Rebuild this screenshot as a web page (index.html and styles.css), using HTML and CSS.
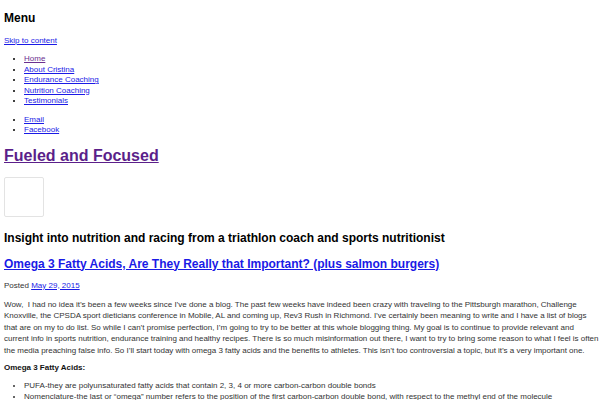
FILE: index.html
```html
<!DOCTYPE html>
<html>
<head>
<meta charset="utf-8">
<link rel="stylesheet" href="styles.css">
</head>
<body>
<div class="page">
  <h2 class="menu-title">Menu</h2>
  <a class="skip" href="#content">Skip to content</a>
  <ul class="nav">
    <li><a class="visited" href="#">Home</a></li>
    <li><a href="#">About Cristina</a></li>
    <li><a href="#">Endurance Coaching</a></li>
    <li><a href="#">Nutrition Coaching</a></li>
    <li><a href="#">Testimonials</a></li>
  </ul>
  <ul class="nav social">
    <li><a href="#">Email</a></li>
    <li><a href="#">Facebook</a></li>
  </ul>
  <h1 class="site-title"><a href="#">Fueled and Focused</a></h1>
  <div class="logo-box"></div>
  <h2 class="tagline">Insight into nutrition and racing from a triathlon coach and sports nutritionist</h2>
  <article id="content" class="post">
    <h2 class="post-title"><a href="#">Omega 3 Fatty Acids, Are They Really that Important? (plus salmon burgers)</a></h2>
    <p class="meta">Posted <a href="#">May 29, 2015</a></p>
    <p class="text">Wow,&nbsp; I had no idea it’s been a few weeks since I’ve done a blog. The past few weeks have indeed been crazy with traveling to the Pittsburgh marathon, Challenge Knoxville, the CPSDA sport dieticians conference in Mobile, AL and coming up, Rev3 Rush in Richmond. I’ve certainly been meaning to write and I have a list of blogs that are on my to do list. So while I can’t promise perfection, I’m going to try to be better at this whole blogging thing. My goal is to continue to provide relevant and current info in sports nutrition, endurance training and healthy recipes. There is so much misinformation out there, I want to try to bring some reason to what I feel is often the media preaching false info. So I’ll start today with omega 3 fatty acids and the benefits to athletes. This isn’t too controversial a topic, but it’s a very important one.</p>
    <p class="text"><strong>Omega 3 Fatty Acids:</strong></p>
    <ul class="text-list">
      <li>PUFA-they are polyunsaturated fatty acids that contain 2, 3, 4 or more carbon-carbon double bonds</li>
      <li>Nomenclature-the last or “omega” number refers to the position of the first carbon-carbon double bond, with respect to the methyl end of the molecule</li>
      <li>Omega 3 fatty acids are essential fatty acids, meaning the body cannot make them</li>
    </ul>
  </article>
</div>
</body>
</html>
```

FILE: styles.css
```css
html, body {
  margin: 0;
  padding: 0;
  background: #fff;
}
body {
  font-family: "Liberation Sans", Arial, sans-serif;
  color: #000;
}
.page {
  padding: 4px 0 4px 4px;
}
a {
  color: #1a1ae6;
}
a.visited {
  color: #6b2f8f;
}
.menu-title {
  font-size: 12px;
  font-weight: bold;
  margin: 7px 0 11px;
  line-height: 14px;
}
.skip {
  display: block;
  font-size: 8px;
  line-height: 10px;
}
.nav {
  list-style: disc;
  margin: 8px 0 0;
  padding-left: 20px;
  font-size: 8px;
  line-height: 10.5px;
}
.nav.social {
  margin-top: 8px;
}
.site-title {
  font-size: 16px;
  line-height: 19px;
  margin: 10px 0 12px;
}
.site-title a {
  color: #5b1f8a;
}
.logo-box {
  width: 38px;
  height: 38px;
  border: 1px solid #e3e3e3;
  border-radius: 2px;
}
.tagline {
  font-size: 12px;
  line-height: 15px;
  margin: 14px 0 11px;
}
.post-title {
  font-size: 12px;
  line-height: 15px;
  margin: 0 0 8px;
}
.post-title a {
  color: #1a1ae6;
}
.meta {
  font-size: 8px;
  line-height: 11px;
  color: #333;
  margin: 0 0 8px;
}
.text {
  font-size: 8px;
  line-height: 11.5px;
  color: #333;
  margin: 0 0 6px;
  letter-spacing: -0.02px;
}
.text strong {
  color: #111;
}
.text-list {
  font-size: 8px;
  line-height: 11.5px;
  color: #333;
  margin: 0;
  padding-left: 20px;
}
```
